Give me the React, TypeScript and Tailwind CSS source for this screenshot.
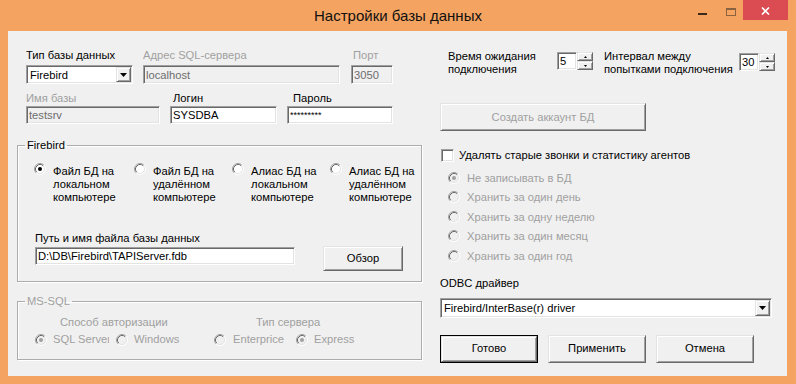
import React from "react";

const FONT = "font-['Liberation_Sans',Arial,sans-serif]";
const sunken =
  "border border-t-[#a0a0a0] border-l-[#a0a0a0] border-r-white border-b-white shadow-[inset_1px_1px_0_#696969,inset_-1px_-1px_0_#e3e3e3]";
const raised =
  "border border-t-[#e3e3e3] border-l-[#e3e3e3] border-r-[#696969] border-b-[#696969] shadow-[inset_1px_1px_0_#ffffff,inset_-1px_-1px_0_#a0a0a0] bg-[#f0f0f0]";

function Radio({ checked = false, disabled = false }: { checked?: boolean; disabled?: boolean }) {
  return (
    <svg width="12" height="12" viewBox="0 0 12 12" className="shrink-0 block">
      <circle cx="6" cy="6" r="4.5" fill={disabled ? "#f0f0f0" : "#ffffff"} />
      <path d="M2.11 9.89 A5.5 5.5 0 0 1 9.89 2.11" fill="none" stroke="#a0a0a0" strokeWidth="1" />
      <path d="M2.82 9.18 A4.5 4.5 0 0 1 9.18 2.82" fill="none" stroke="#696969" strokeWidth="1" />
      <path d="M9.89 2.11 A5.5 5.5 0 0 1 2.11 9.89" fill="none" stroke="#ffffff" strokeWidth="1" />
      <path d="M9.18 2.82 A4.5 4.5 0 0 1 2.82 9.18" fill="none" stroke="#e3e3e3" strokeWidth="1" />
      {checked && <circle cx="6" cy="6" r="2" fill={disabled ? "#a0a0a0" : "#000000"} />}
    </svg>
  );
}

function Edit({ className, value, disabled = false, small = false }: { className: string; value: string; disabled?: boolean; small?: boolean }) {
  return (
    <div
      className={`${sunken} ${disabled ? "bg-[#f0f0f0] text-[#6d6d6d]" : "bg-white text-black"} pl-[2px] flex whitespace-nowrap overflow-hidden leading-[14px] ${small ? "text-[9px] items-start pt-[1px]" : "items-center"} ${className}`}
    >
      {value}
    </div>
  );
}

function Combo({ className, value }: { className: string; value: string }) {
  return (
    <div className={`${sunken} bg-white flex p-[1px] ${className}`}>
      <div className="flex-1 pl-[2px] flex items-center leading-[14px] whitespace-nowrap overflow-hidden">{value}</div>
      <div className={`${raised} w-[15px] flex items-center justify-center`}>
        <svg width="7" height="4" viewBox="0 0 7 4" className="block">
          <path d="M0 0H7L3.5 4Z" fill="#000" />
        </svg>
      </div>
    </div>
  );
}

function Spin({ className, value }: { className: string; value: string }) {
  return (
    <div className={`flex h-[18px] ${className}`}>
      <div className={`${sunken} bg-white w-[20px] h-[18px] pl-[2px] flex items-center leading-[14px]`}>{value}</div>
      <div className="flex flex-col w-[16px] h-[18px]">
        <div className={`${raised} h-[9px] flex items-center justify-center`}>
          <svg width="3" height="2" viewBox="0 0 3 2" className="block">
            <path d="M1.5 0L3 2H0Z" fill="#000" />
          </svg>
        </div>
        <div className={`${raised} h-[9px] flex items-center justify-center`}>
          <svg width="3" height="2" viewBox="0 0 3 2" className="block">
            <path d="M0 0H3L1.5 2Z" fill="#000" />
          </svg>
        </div>
      </div>
    </div>
  );
}

function Btn({
  className,
  children,
  disabled = false,
  isDefault = false,
}: {
  className: string;
  children: React.ReactNode;
  disabled?: boolean;
  isDefault?: boolean;
}) {
  if (isDefault)
    return (
      <div className={`border border-black flex ${className}`}>
        <div className={`${raised} flex-1 flex items-center justify-center`}>{children}</div>
      </div>
    );
  return (
    <div className={`${raised} ${disabled ? "text-[#a0a0a0]" : ""} flex items-center justify-center ${className}`}>
      {children}
    </div>
  );
}

const groupBox = "w-[405px] border border-[#acacac] shadow-[inset_1px_1px_0_#ffffff,1px_1px_0_#ffffff]";

export default function App() {
  const keep = ["Не записывать в БД", "Хранить за один день", "Хранить за одну неделю", "Хранить за один месяц", "Хранить за один год"];
  return (
    <div className={`w-[796px] h-[384px] bg-[#f4a460] flex flex-col ${FONT} text-[11.2px] text-black overflow-hidden`}>
      {/* Title bar */}
      <div className="h-[31px] grid grid-cols-[1fr_auto_1fr] shrink-0">
        <div />
        <div className="self-center text-[15px] leading-[18px] text-[#111111]">Настройки базы данных</div>
        <div className="flex justify-end items-start pr-[8px]">
          <div className="w-[27px] h-[20px] pt-[13px] flex justify-center">
            <div className="w-[9px] h-[2px] bg-[#3a2a1a]" />
          </div>
          <div className="w-[27px] h-[20px] pt-[8px] pl-[2px] flex justify-center">
            <div className="w-[10px] h-[8px] border border-t-2 border-[#8a6240]" />
          </div>
          <div className="w-[45px] h-[20px] bg-[#db4c52] flex items-center justify-center pt-[2px]">
            <svg width="9" height="8" viewBox="0 0 9 8" className="block">
              <path d="M1 0.5L8 7.5M8 0.5L1 7.5" stroke="#ffffff" strokeWidth="1.6" />
            </svg>
          </div>
        </div>
      </div>

      {/* Client area */}
      <div className="ml-[8px] w-[779px] h-[345px] bg-[#f0f0f0] flex">
        {/* Left column */}
        <div className="ml-[9px] w-[405px] pt-[17px] flex flex-col">
          <div className="ml-[9px] flex items-start">
            <div className="flex flex-col w-[107px]">
              <div className="h-[14px] leading-[14px] whitespace-nowrap">Тип базы данных</div>
              <Combo className="mt-[3px] w-[107px] h-[19px]" value="Firebird" />
            </div>
            <div className="ml-[10px] flex flex-col w-[197px]">
              <div className="h-[14px] leading-[14px] text-[#a0a0a0] whitespace-nowrap">Адрес SQL-сервера</div>
              <Edit className="mt-[3px] w-[197px] h-[19px]" disabled value="localhost" />
            </div>
            <div className="ml-[11px] flex flex-col w-[42px]">
              <div className="h-[14px] leading-[14px] text-[#a0a0a0] pl-[2px]">Порт</div>
              <Edit className="mt-[3px] w-[42px] h-[19px]" disabled value="3050" />
            </div>
          </div>

          <div className="mt-[7px] ml-[9px] flex items-start">
            <div className="flex flex-col w-[134px]">
              <div className="h-[14px] leading-[14px] text-[#a0a0a0]">Имя базы</div>
              <Edit className="mt-[1px] w-[134px] h-[18px]" disabled value="testsrv" />
            </div>
            <div className="ml-[10px] flex flex-col w-[107px]">
              <div className="h-[14px] leading-[14px] pl-[3px]">Логин</div>
              <Edit className="mt-[1px] w-[107px] h-[18px]" value="SYSDBA" />
            </div>
            <div className="ml-[10px] flex flex-col w-[106px]">
              <div className="h-[14px] leading-[14px] pl-[6px]">Пароль</div>
              <Edit className="mt-[1px] w-[106px] h-[18px]" small value="*********" />
            </div>
          </div>

          <fieldset className={`mt-[14px] ${groupBox}`}>
            <legend className="ml-[7px] px-[2px] leading-[14px]">Firebird</legend>
            <div className="pt-[13px] pb-[10px] flex flex-col">
              <div className="flex items-start ml-[16px]">
                <div className="flex items-start w-[100px]">
                  <div className="mt-[-2px]">
                    <Radio checked />
                  </div>
                  <div className="ml-[7px] leading-[13px] whitespace-nowrap">
                    Файл БД на
                    <br />
                    локальном
                    <br />
                    компьютере
                  </div>
                </div>
                <div className="flex items-start w-[98px]">
                  <div className="mt-[-2px]">
                    <Radio />
                  </div>
                  <div className="ml-[7px] leading-[13px] whitespace-nowrap">
                    Файл БД на
                    <br />
                    удалённом
                    <br />
                    компьютере
                  </div>
                </div>
                <div className="flex items-start w-[98px]">
                  <div className="mt-[-2px]">
                    <Radio />
                  </div>
                  <div className="ml-[7px] leading-[13px] whitespace-nowrap">
                    Алиас БД на
                    <br />
                    локальном
                    <br />
                    компьютере
                  </div>
                </div>
                <div className="flex items-start">
                  <div className="mt-[-2px]">
                    <Radio />
                  </div>
                  <div className="ml-[7px] leading-[13px] whitespace-nowrap">
                    Алиас БД на
                    <br />
                    удалённом
                    <br />
                    компьютере
                  </div>
                </div>
              </div>

              <div className="mt-[27px] ml-[17px] flex items-start">
                <div className="flex flex-col w-[260px]">
                  <div className="h-[14px] leading-[14px] whitespace-nowrap">Путь и имя файла базы данных</div>
                  <Edit className="mt-[2px] w-[260px] h-[18px]" value={"D:\\DB\\Firebird\\TAPIServer.fdb"} />
                </div>
                <Btn className="ml-[28px] mt-[15px] w-[80px] h-[25px]">Обзор</Btn>
              </div>
            </div>
          </fieldset>

          <fieldset className={`mt-[12px] ${groupBox}`}>
            <legend className="ml-[7px] px-[2px] leading-[14px] text-[#a0a0a0]">MS-SQL</legend>
            <div className="pt-[7px] pb-[13px] flex flex-col text-[#a0a0a0]">
              <div className="flex h-[14px] leading-[14px]">
                <div className="w-[238px] pl-[42px] whitespace-nowrap">Способ авторизации</div>
                <div className="whitespace-nowrap">Тип сервера</div>
              </div>
              <div className="mt-[4px] ml-[17px] h-[13px] flex items-center leading-[13px]">
                <div className="w-[81px] flex items-center">
                  <Radio checked disabled />
                  <div className="ml-[6px] w-[56px] overflow-hidden whitespace-nowrap">SQL Server</div>
                </div>
                <div className="w-[98px] flex items-center">
                  <Radio disabled />
                  <div className="ml-[6px] whitespace-nowrap">Windows</div>
                </div>
                <div className="w-[82px] flex items-center">
                  <Radio disabled />
                  <div className="ml-[7px] whitespace-nowrap">Enterprice</div>
                </div>
                <div className="flex items-center">
                  <Radio checked disabled />
                  <div className="ml-[6px] whitespace-nowrap">Express</div>
                </div>
              </div>
            </div>
          </fieldset>
        </div>

        {/* Right column */}
        <div className="ml-[18px] w-[347px] pt-[19px] flex flex-col">
          <div className="flex items-start">
            <div className="ml-[8px] w-[109px] leading-[13px] whitespace-nowrap">
              Время ожидания
              <br />
              подключения
            </div>
            <Spin className="mt-[2px]" value="5" />
            <div className="ml-[11px] w-[135px] leading-[13px] whitespace-nowrap">
              Интервал между
              <br />
              попытками подключения
            </div>
            <Spin className="mt-[3px]" value="30" />
          </div>

          <Btn disabled className="mt-[27px] w-[206px] h-[28px]">
            Создать аккаунт БД
          </Btn>

          <div className="mt-[17px] h-[14px] flex items-center">
            <div className={`${sunken} ml-[1px] bg-white w-[13px] h-[13px]`} />
            <div className="ml-[5px] leading-[14px] whitespace-nowrap">Удалять старые звонки и статистику агентов</div>
          </div>

          <div className="mt-[6px] flex flex-col">
            {keep.map((t, i) => (
              <div key={t} className="h-[19.5px] flex items-center">
                <div className="ml-[8px]">
                  <Radio disabled checked={i === 0} />
                </div>
                <div className="ml-[7px] leading-[14px] text-[#a0a0a0] whitespace-nowrap">{t}</div>
              </div>
            ))}
          </div>

          <div className="mt-[10px] leading-[14px]">ODBC драйвер</div>
          <Combo className="mt-[8px] w-[332px] h-[20px]" value="Firebird/InterBase(r) driver" />

          <div className="mt-[17px] flex">
            <Btn isDefault className="w-[98px] h-[28px]">
              Готово
            </Btn>
            <Btn className="ml-[10px] w-[98px] h-[28px]">Применить</Btn>
            <Btn className="ml-[10px] w-[98px] h-[28px]">Отмена</Btn>
          </div>
        </div>
      </div>
    </div>
  );
}
